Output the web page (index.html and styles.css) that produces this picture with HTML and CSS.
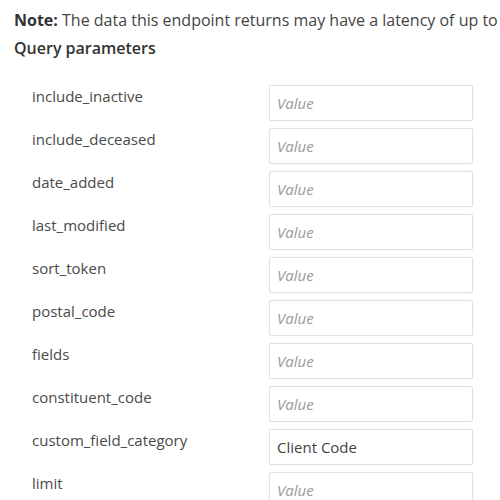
FILE: index.html
```html
<!DOCTYPE html>
<html>
<head>
<meta charset="utf-8">
<link rel="stylesheet" href="styles.css">
</head>
<body>
<div class="page">
  <p class="note"><strong>Note:</strong> The data this endpoint returns may have a latency of up to 30 minutes.</p>
  <h3 class="section">Query parameters</h3>
  <div class="params">
    <div class="row"><span class="label">include_inactive</span><input class="field" placeholder="Value"></div>
    <div class="row"><span class="label">include_deceased</span><input class="field" placeholder="Value"></div>
    <div class="row"><span class="label">date_added</span><input class="field" placeholder="Value"></div>
    <div class="row"><span class="label">last_modified</span><input class="field" placeholder="Value"></div>
    <div class="row"><span class="label">sort_token</span><input class="field" placeholder="Value"></div>
    <div class="row"><span class="label">postal_code</span><input class="field" placeholder="Value"></div>
    <div class="row"><span class="label">fields</span><input class="field" placeholder="Value"></div>
    <div class="row"><span class="label">constituent_code</span><input class="field" placeholder="Value"></div>
    <div class="row"><span class="label">custom_field_category</span><input class="field" placeholder="Value" value="Client Code"></div>
    <div class="row"><span class="label">limit</span><input class="field" placeholder="Value"></div>
  </div>
</div>
</body>
</html>
```
FILE: styles.css
```css
html, body {
  margin: 0;
  padding: 0;
  background: #ffffff;
}
body {
  font-family: "Open Sans", "Liberation Sans", sans-serif;
  font-size: 15px;
  color: #444;
  overflow: hidden;
}
.page {
  padding: 10px 0 0 14px;
  width: 486px;
  overflow: hidden;
}
.note {
  margin: 0;
  font-size: 16px;
  line-height: 20px;
  white-space: nowrap;
  color: #444;
}
.note strong {
  font-weight: 700;
  color: #333;
}
.section {
  margin: 8px 0 0 0;
  font-size: 16px;
  line-height: 20px;
  font-weight: 600;
  color: #333;
}
.params {
  display: flex;
  flex-direction: column;
  gap: 7px;
  margin-top: 27px;
  padding-left: 18px;
}
.row {
  display: grid;
  grid-template-columns: 237px 204px;
  align-items: start;
}
.label {
  padding-top: 1px;
  line-height: 20px;
  color: #4a4a4a;
}
.field {
  box-sizing: border-box;
  width: 204px;
  height: 36px;
  margin: 0;
  padding: 0 7px;
  border: 1px solid #e0e0e0;
  border-radius: 2px;
  box-shadow: 0 0 2px rgba(0,0,0,0.06);
  font-family: "Open Sans", "Liberation Sans", sans-serif;
  font-size: 15px;
  color: #444;
  background: #fff;
  outline: none;
}
.field::placeholder {
  font-style: italic;
  color: #9a9a9a;
}
```
